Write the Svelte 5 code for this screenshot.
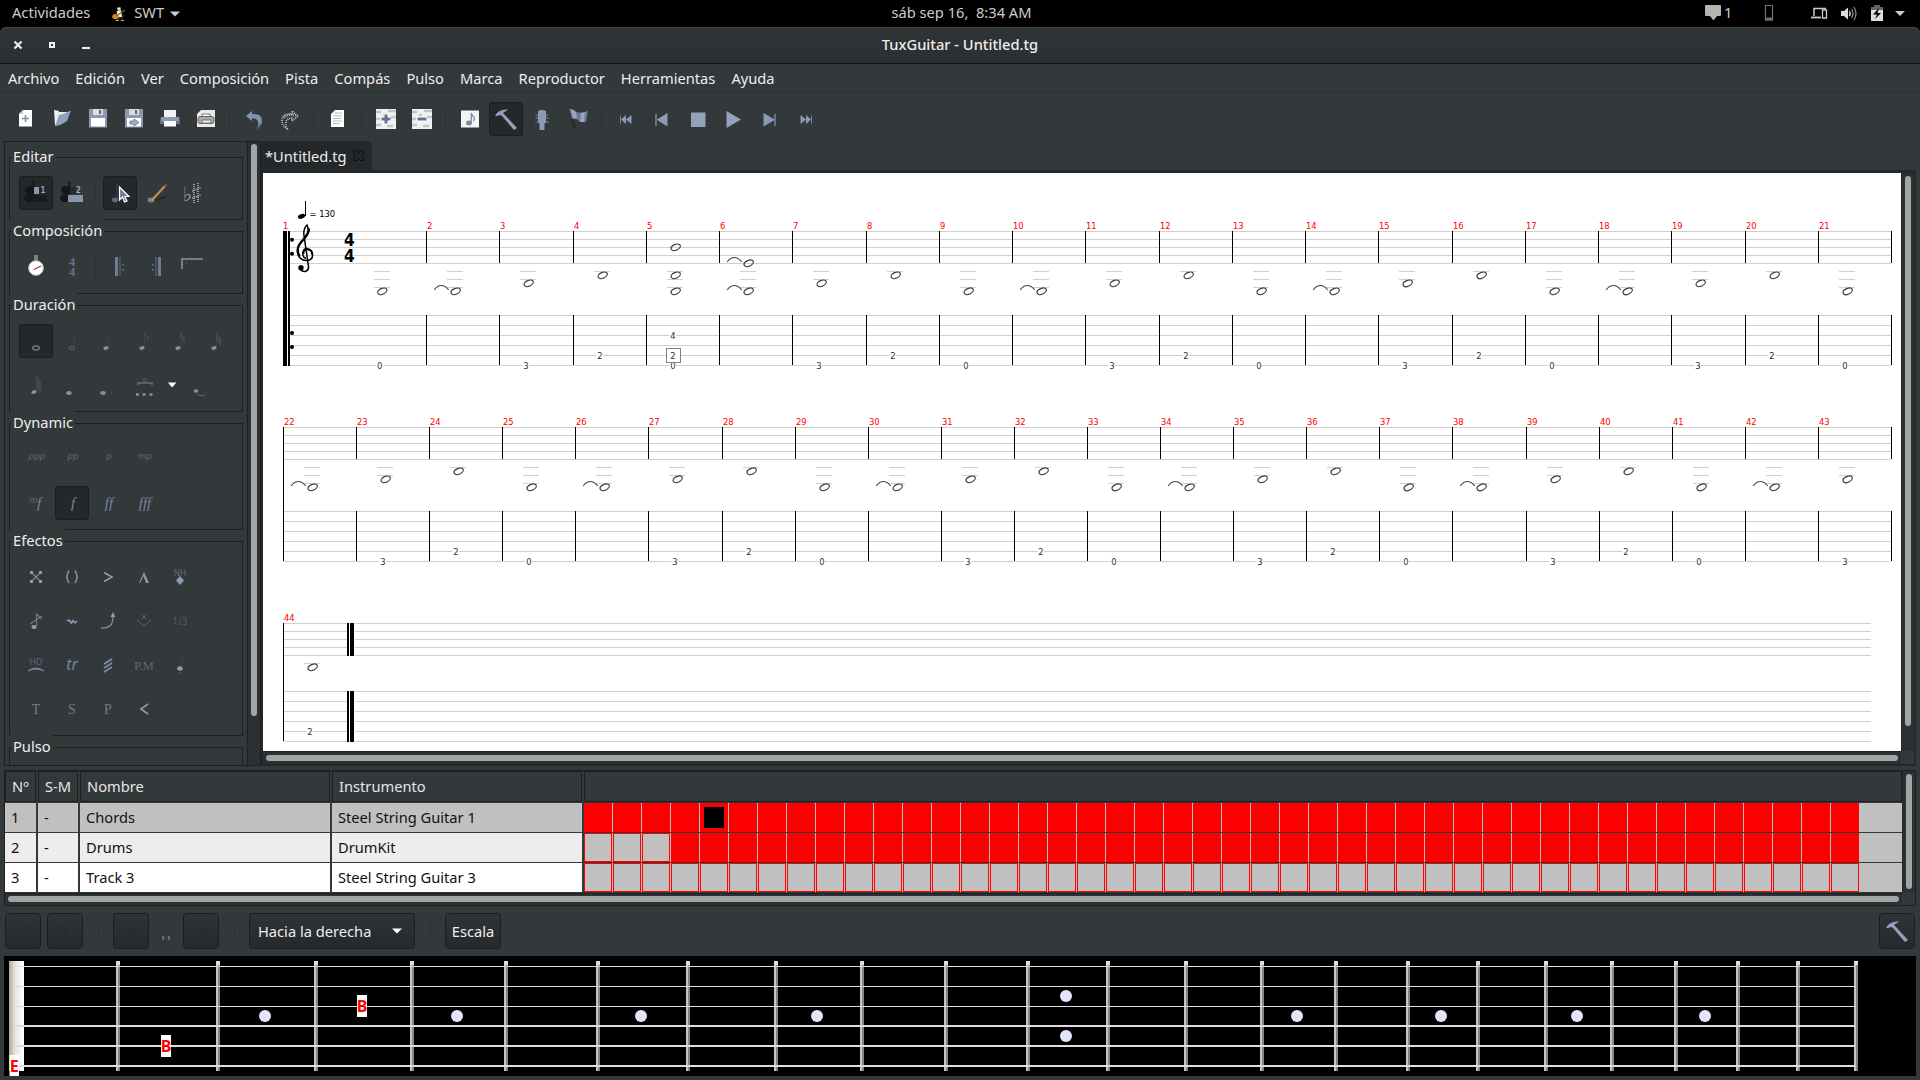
<script>
  const menus = ['Archivo', 'Edición', 'Ver', 'Composición', 'Pista', 'Compás', 'Pulso', 'Marca', 'Reproductor', 'Herramientas', 'Ayuda'];

  const toolbar = ['new', 'open', 'save', 'saveas', 'print', 'preview', '|', 'undo', 'redo', '|', 'doc', '|', 'trackadd', 'trackdel', '|', 'score', '*hammer', 'guitar', 'flag', '|', 'first', 'prev', 'stop', 'play', 'next', 'last'];

  const groups = [
    { title: 'Editar', rows: [['*voice1', 'voice2', '|', '*select', 'pencil', 'accidental']] },
    { title: 'Composición', rows: [['tempo', 'timesig', '|', 'repopen', 'repclose', 'repalt']] },
    { title: 'Duración', rows: [['*whole', 'half', 'quarter', 'eighth', 'sixteenth', 'thirty'], ['sixty', 'dotted', 'ddotted', 'tuplet', 'v', 'tied']] },
    { title: 'Dynamic', rows: [['ppp', 'pp', 'p', 'mp'], ['mf', '*f', 'ff', 'fff']] },
    { title: 'Efectos', rows: [['dead', 'ghost', 'accent', 'heavy', 'harmonic'], ['grace', 'vibrato', 'bend', 'tremolobar', 'slide'], ['hammeron', 'trill', 'tremolo', 'palm', 'staccato'], ['tap', 'slap', 'pop', 'fade']] },
    { title: 'Pulso', rows: [[]] }
  ];

  // Music: each measure repeats a four-bar figure, with chords in bars 5 and 6
  const figure = { 1: { y: 60.3, fret: '0', line: 5 }, 2: { y: 60.3, tie: true }, 3: { y: 52.3, fret: '3', line: 5 }, 0: { y: 44.3, fret: '2', line: 4 } };
  function notesOf(n) {
    if (n === 5) return [{ y: 16.3, fret: '4', line: 2 }, { y: 44.3 }, { y: 60.3, fret: '0', line: 5 }];
    if (n === 6) return [{ y: 32.3, tie: true }, { y: 60.3, tie: true }];
    return [figure[n % 4]];
  }
  function measure(n, x, top, tabTop, shift = 0) {
    const notes = notesOf(n);
    const low = Math.max(...notes.map((k) => k.y));
    return { n, x, top, tabTop, notes, nx: x + 29.7 + shift, tx: x + 27 + shift, ledgers: [40, 48, 56].filter((l) => l < low) };
  }
  const systems = [
    { top: 231, tab: 315, from: 290, to: 1891, measures: [measure(1, 282, 231, 315, 70.6), ...Array.from({ length: 20 }, (_, k) => measure(k + 2, Math.round(426 + 73.26 * k), 231, 315))] },
    { top: 427, tab: 511, from: 283, to: 1891, measures: Array.from({ length: 22 }, (_, k) => measure(k + 22, Math.round(283 + 73.09 * k), 427, 511)) },
    { top: 623, tab: 691, from: 283, to: 1871, measures: [measure(44, 283, 623, 691)] }
  ];

  const tracks = [
    { n: 1, name: 'Chords', inst: 'Steel String Guitar 1', empty: 0, current: 4 },
    { n: 2, name: 'Drums', inst: 'DrumKit', empty: 3, current: -1 },
    { n: 3, name: 'Track 3', inst: 'Steel String Guitar 3', empty: 44, current: -1 }
  ];
  const bars = Array.from({ length: 44 }, (_, k) => k);

  const frets = [116, 216, 314, 410, 504, 596, 686, 774, 860, 944, 1026, 1106, 1184, 1260, 1334, 1406, 1476, 1544, 1610, 1674, 1736, 1796, 1854];
  const dots = [[265, 1016], [457, 1016], [641, 1016], [817, 1016], [1066, 996], [1066, 1036], [1297, 1016], [1441, 1016], [1577, 1016], [1705, 1016]];
  const strings = [[966, 1], [986, 1], [1006, 1], [1025, 2], [1045, 2], [1065, 2]];
</script>

{#snippet flags(count, x, y)}
  {#each Array.from({ length: count }) as _, k}
    <path d="M{x} {y + k * 3}c.5 3 4 4 3 7" fill="none" stroke="#505b6c" stroke-width="1" />
  {/each}
{/snippet}

{#snippet track(sign)}
  <path d="M-10-10H10V10H-10z" fill="#f1f1f1" />
  <path d="M-10-7H-5M2-8H10M-10 0H-6M5-2H10M-10 6H-5M1 7H7M-3-4H0" stroke="#c2c5c8" stroke-width="2.500" />
  <path d="M-5 0H5{sign === '+' ? 'M0-5V5' : ''}" stroke="#fff" stroke-width="5" />
  <path d="M-4.500 0H4.500{sign === '+' ? 'M0-4.500V4.500' : ''}" stroke="#64748e" stroke-width="3" />
{/snippet}

{#snippet icon(name)}
  <svg class="icon" width="34" height="34" viewBox="-17 -17 34 34">
    {#if name === 'new'}
      <path d="M-3-9H6V7.500H-7V-5z" fill="#fff" /><path d="M-7-5H-3V-9z" fill="#c9cbcc" />
      <path d="M-.5-4V3M-4-.5H3" stroke="#7f90ab" stroke-width="1.600" />
    {:else if name === 'open'}
      <path d="M-8-9L-3-8V-7H6L5-4L-2 6H-7z" fill="#eceded" />
      <path d="M-3-4L1-5L9-8.500L5 2Q1 5-7 7.500z" fill="#8ea0bc" />
    {:else if name === 'save' || name === 'saveas'}
      <path d="M-9-10H9V8.500H-9z" fill="#8a98b0" />
      <path d="M-5-10H5V-4H-5z" fill="#dadcde" /><path d="M1-9H3V-5H1z" fill="#56647c" />
      <path d="M-7-1H7V7.500H-7z" fill="#fff" />
      {#if name === 'saveas'}<path d="M-4 2H0V0L5 3.500L0 7V5H-4z" fill="#9fb0c8" stroke="#5d6b82" stroke-width=".8" />{/if}
    {:else if name === 'print'}
      <path d="M-6-9H6V-1H-6z" fill="#f2f2f2" /><path d="M-9-2H9L10 5H-10z" fill="#8a9ab4" />
      <path d="M-10 2H10V5H-10z" fill="#66758e" /><path d="M-6 2H6V7.500H-6z" fill="#fff" />
    {:else if name === 'preview'}
      <path d="M-5-9H9V8H-9V-5z" fill="#eaeaea" />
      <path d="M-4-5H4V-2H-4z" fill="#fff" stroke="#777" /><rect x="-8" y="-2.500" width="16" height="7" rx="2" fill="#aaa" stroke="#666" /><path d="M-4 1H5V4H-4z" fill="#eee" stroke="#777" />
    {:else if name === 'undo'}
      <path d="M-8-3L-2-8V-5Q8-6 8 2Q8 7 3 9.500Q7 0-2-1V2z" fill="#7f92b1" />
      <path d="M7 5Q6 8 3 9.500" stroke="#4e5d78" fill="none" stroke-width="2" />
    {:else if name === 'redo'}
      <path d="M8-3L2-8V-5Q-8-6-8 2Q-8 7-3 9.500Q-7 0 2-1V2z" fill="none" stroke="#c3c6c8" stroke-width="1.600" stroke-dasharray="1 1" />
      <path d="M-6-1Q-3-5 3-4H7" fill="none" stroke="#a9adb0" stroke-width="2.500" stroke-dasharray="1 1" />
    {:else if name === 'doc'}
      <path d="M-3-9H6V8H-7V-5z" fill="#fff" /><path d="M-3-6H4M-5-3H4M-5-.5H3M-5 2H4M-5 4.500H2" stroke="#bbb" stroke-width="1" />
    {:else if name === 'trackadd'}{@render track('+')}
    {:else if name === 'trackdel'}{@render track('-')}
    {:else if name === 'score'}
      <path d="M-9-8.500H9V8.500H-9z" fill="#f4f4f4" /><ellipse cx="-1" cy="4" rx="3" ry="2.400" fill="#7a8dab" />
      <path d="M1.300 4V-6Q2-3 4-2Q5 0 3.500 2" fill="none" stroke="#7a8dab" stroke-width="1.300" />
    {:else if name === 'hammer'}
      <path d="M-11-3L-9-6Q-5-10 2-9.500L0-8Q-2-7-3-6L-2-5L11 9L8 11L-4-3L-6-4L-9-3z" fill="#93a2ba" />
    {:else if name === 'guitar'}
      <path d="M-4-8Q0-10 4-8L4 3L2.500 5V11H-2.500V5L-4 3z" fill="#8b9bb4" />
      <path d="M-6.500-4H-4M-6.500-1H-4M-6.500 3H-4M4-4H6.500M4-1H6.500M4 3H6.500" stroke="#65728a" stroke-width="1.300" />
    {:else if name === 'flag'}
      <path d="M-9-9L-3 9" stroke="#222" stroke-width="1.500" /><path d="M-9-10Q-5-10-2-7Q3-5 10-8L8 3Q2 4-1 0Q-3-1-6 0z" fill="#6d7b92" />
      <path d="M-7-10Q-4-9-2-7L-1 0L-5-1zM3-6L7-7L6 3L2 3z" fill="#98a7be" />
    {:else if name === 'first'}
      <path d="M-5.500-3.500V4.500" stroke="#76859f" /><path d="M-5 .5L0-4V5zM0 .5L5.500-4V5z" fill="#8b9bb4" />
    {:else if name === 'last'}
      <path d="M5.500-3.500V4.500" stroke="#76859f" /><path d="M5 .5L0-4V5zM0 .5L-5.500-4V5z" fill="#8b9bb4" />
    {:else if name === 'prev'}
      <path d="M-6-5V7" stroke="#8b9bb4" stroke-width="1.200" /><path d="M-5.500.8L5.500-6V7.500z" fill="#8b9bb4" />
    {:else if name === 'next'}
      <path d="M5-5V7" stroke="#8b9bb4" stroke-width="1.200" /><path d="M5 .8L-6.500-6V7.500z" fill="#8b9bb4" />
    {:else if name === 'stop'}
      <path d="M-7-6.500H7.500V8H-7z" fill="#93a2bb" />
    {:else if name === 'play'}
      <path d="M-7.500-8L7 .5L-7.500 9z" fill="#93a2bb" />
    {:else if name === 'voice1' || name === 'voice2'}
      <ellipse cx="-6" cy="-3" rx="5" ry="4" fill="#141617" /><ellipse cx="-7" cy="5" rx="5" ry="4" fill="#141617" /><path d="M-2.500-12V6" stroke="#141617" stroke-width="2" />
      {#if name === 'voice1'}
        <path d="M-4 2H11V9H-4z" fill="#1a1d1f" /><path d="M-2-6H3V1H-2z" fill="#8796ae" /><text x="4.500" y="0" class="mono">1</text>
      {:else}
        <path d="M-2-6H4V1H-2z" fill="#25292b" /><path d="M-4 2H11V9H-4z" fill="#8796ae" /><text x="4" y="0" class="mono">2</text>
      {/if}
    {:else if name === 'select'}
      <path d="M-3-9V5" stroke="#3b4350" /><ellipse cx="-5" cy="7" rx="3" ry="2.400" fill="#5d6a80" />
      <path d="M-.5-6V7L2.500 4L4.500 9L7 8L5 3.500H9z" fill="#70819c" stroke="#fff" stroke-width="1.200" />
    {:else if name === 'pencil'}
      <path d="M0 8Q5 5 10 4" stroke="#25292b" stroke-width="2" fill="none" /><ellipse cx="-5" cy="7" rx="3.500" ry="2.400" fill="#76849b" />
      <path d="M-4 7L9-7" stroke="#c98c44" stroke-width="2.200" /><path d="M8.500-6.500L10.500-8.500" stroke="#8a4b45" stroke-width="2.400" />
    {:else if name === 'accidental'}
      <text x="-9.500" y="8" class="sym">♭</text><path d="M2-9V10M6-10V9M0-2L9-5M0 5L9 2" stroke="#a5a9ab" stroke-width="1.800" stroke-dasharray="1 1" />
    {:else if name === 'tempo'}
      <path d="M-2-12H2V-7H-2z" fill="#7d8183" /><circle cx="0" cy="1" r="7.300" fill="#fff" stroke="#c8cacb" /><path d="M-2 2.500L5-1" stroke="#b03030" stroke-width="1.300" />
    {:else if name === 'timesig'}
      <text x="0" y="-1.500" class="sig">4</text><text x="0" y="9" class="sig">4</text>
    {:else if name === 'repopen'}
      <path d="M-5-10H-2V9H-5z" fill="#6f7c94" /><path d="M0-10V9" stroke="#59657a" stroke-width="1.200" /><path d="M2.300-3H4V-1.500H2.300zM2.300 2H4V3.500H2.300z" fill="#66728a" />
    {:else if name === 'repclose'}
      <path d="M2-10H5V9H2z" fill="#6f7c94" /><path d="M0-10V9" stroke="#59657a" stroke-width="1.200" /><path d="M-4-3H-2.300V-1.500H-4zM-4 2H-2.300V3.500H-4z" fill="#66728a" />
    {:else if name === 'repalt'}
      <path d="M-10 2V-8H11" fill="none" stroke="#707d95" stroke-width="2" /><path d="M-6-4H-5V-3H-6z" fill="#66728a" />
    {:else if name === 'whole'}
      <ellipse cx="0" cy="7" rx="3.300" ry="2" fill="none" stroke="#6a7790" stroke-width="1.400" />
    {:else if name === 'half'}
      <ellipse cx="0" cy="7" rx="2.600" ry="1.600" fill="none" stroke="#59657b" transform="rotate(-25 0 7)" /><path d="M2.500 6V-8" stroke="#3a4248" />
    {:else if ['quarter', 'eighth', 'sixteenth', 'thirty', 'sixty'].includes(name)}
      <ellipse cx="-2" cy="7" rx="2.800" ry="1.900" fill="#8190a9" transform="rotate(-20 -2 7)" /><path d="M.5 6V-8" stroke="#3c444b" />
      {@render flags({ quarter: 0, eighth: 1, sixteenth: 2, thirty: 3, sixty: 4 }[name], 1, -8)}
    {:else if name === 'dotted' || name === 'ddotted'}
      <ellipse cx={name === 'dotted' ? -3 : -5} cy="8" rx="2.800" ry="1.900" fill="#8190a9" /><path d="M{name === 'dotted' ? 0 : -2} 7V-7" stroke="#394147" /><path d="M3 8H{name === 'dotted' ? 4 : 8}" stroke="#4a525d" stroke-dasharray="1 2" />
    {:else if name === 'tuplet'}
      <path d="M-6 0V-2H8V0" fill="none" stroke="#66728a" stroke-width="1.500" /><circle cx="1" cy="-5" r="1.600" fill="none" stroke="#505b6c" /><path d="M-8 9.500h3M-1.500 9.500h3M5.500 9.500h3" stroke="#8190a9" stroke-width="2.600" />
    {:else if name === 'v'}
      <path d="M-4-2.500H4.500L0 2.500z" fill="#fff" />
    {:else if name === 'tied'}
      <ellipse cx="-4" cy="6" rx="2.400" ry="1.700" fill="#8190a9" /><path d="M-2 5V-7" stroke="#394147" /><path d="M-3 9Q1 12 5 10" fill="none" stroke="#59657b" />
    {:else if ['ppp', 'pp', 'p', 'mp'].includes(name)}
      <text x="1" y="0" class="dyn soft">{name}</text>
    {:else if name === 'mf'}
      <text x="-2.500" y="0" class="dyn soft">m</text><text x="3" y="4.500" class="dyn loud">f</text>
    {:else if ['f', 'ff', 'fff'].includes(name)}
      <text x="1" y="4.500" class="dyn loud">{name}</text>
    {:else if name === 'dead'}
      <path d="M-5-5L5 5M5-5L-5 5" stroke="#7f8da6" stroke-width="1.100" />
      <path d="M-6-6h3v3h-3zM3-6h3v3h-3zM-6 3h3v3h-3zM3 3h3v3h-3z" fill="#8b9bb4" />
    {:else if name === 'ghost'}
      <path d="M-3-6.500Q-7 0-3 6M3-6.500Q7 0 3 6" fill="none" stroke="#7f8da6" stroke-width="1.600" />
    {:else if name === 'accent'}
      <path d="M-4-4.500L4 0L-4 4.500" fill="none" stroke="#8b9bb4" stroke-width="1.600" />
    {:else if name === 'heavy'}
      <path d="M-5 6L0-5L5 6H2L-.5-1L-4 6z" fill="#8b9bb4" />
    {:else if name === 'harmonic'}
      <text x="0" y="-1" class="sans">NH</text><path d="M0-1L4 3.500L0 8L-4 3.500z" fill="#8b9bb4" />
    {:else if name === 'grace'}
      <ellipse cx="-2" cy="6" rx="2.600" ry="2" fill="#8b9bb4" /><path d="M.5 5V-7L6-2M-6 3L6-5" fill="none" stroke="#6f7c94" stroke-width="1.100" />
    {:else if name === 'vibrato'}
      <path d="M-5 0L-3-1L-.5 2L1-.5L3 1.800L5 0" fill="none" stroke="#8b9bb4" stroke-width="1.600" />
    {:else if name === 'bend'}
      <path d="M-7 7Q5 8 5-4" fill="none" stroke="#7f8da6" stroke-width="1.300" /><path d="M2.500-4L5-9L7.500-4z" fill="#8b9bb4" />
    {:else if name === 'tremolobar'}
      <path d="M-7-1L0 5L7-1M-2-6L2-2M2-6L-2-2" fill="none" stroke="#59657b" stroke-width="1" />
    {:else if name === 'slide'}
      <text x="0" y="4" class="sans tiny">1/3</text>
    {:else if name === 'hammeron'}
      <text x="0" y="0" class="sans">HO</text><path d="M-8 6Q0 0 8 6Q0 2-8 6z" fill="#8b9bb4" stroke="#76859f" />
    {:else if name === 'trill'}
      <text x="0" y="5" class="dyn trill">tr</text>
    {:else if name === 'tremolo'}
      <path d="M-4-1L4-6M-4 3L4-2M-4 7L4 2" stroke="#7f8da6" stroke-width="1.800" />
    {:else if name === 'palm'}
      <text x="0" y="5" class="ser pm">P.M</text>
    {:else if name === 'staccato'}
      <ellipse cx="0" cy="3.500" rx="2.800" ry="2.200" fill="#8b9bb4" /><path d="M2.500 3V-7" stroke="#3c444b" /><path d="M-1 8H1" stroke="#59657b" />
    {:else if name === 'tap'}<text x="0" y="4.800" class="ser">T</text>
    {:else if name === 'slap'}<text x="0" y="4.800" class="ser">S</text>
    {:else if name === 'pop'}<text x="0" y="4.800" class="ser">P</text>
    {:else if name === 'fade'}
      <path d="M4-5L-3 0L4 5" fill="none" stroke="#8b9bb4" stroke-width="1.700" />
    {/if}
  </svg>
{/snippet}

{#snippet cell(item)}
  {#if item === '|'}
    <span class="sep"></span>
  {:else}
    <span class="cell" class:on={item.startsWith('*')} class:narrow={item === 'v'}>{@render icon(item.replace('*', ''))}</span>
  {/if}
{/snippet}

<div class="screen">
  <header class="topbar">
    <div class="left">
      <span>Actividades</span>
      <svg width="14" height="16" viewBox="0 0 14 16">
        <path d="M5 1h4l1 5 2 4-1 4H4L3 9z" fill="#202020" /><path d="M5 5h4l1 6H5z" fill="#f0f0f0" /><path d="M5.500 1.500h3V4h-3z" fill="#eee" />
        <path d="M6 3.500h3V5H6zM4 14h3v1.500H3zM9 14h3l1 1.500H9z" fill="#e8a33d" /><ellipse cx="3.500" cy="10.500" rx="3.300" ry="2.600" fill="#d98422" /><path d="M4 10L13 4" stroke="#8f5b2b" stroke-width="1.200" />
      </svg>
      <span class="swt">SWT</span>
      <svg width="10" height="6" viewBox="0 0 10 6"><path d="M0 .5H10L5 5.500z" fill="#ccc" /></svg>
    </div>
    <div class="clock">sáb sep 16,&nbsp; 8:34 AM</div>
    <svg class="tray" width="210" height="27" viewBox="1700 0 210 27">
      <path d="M1706 5h14q1 0 1 1v9q0 1-1 1h-3l-3.500 4.500L1710 16h-4q-1 0-1-1V6q0-1 1-1z" fill="#b4b4b4" />
      <text x="1724" y="17.500" class="count">1</text>
      <path d="M1765.500 5.500h7v14.500h-7z" fill="none" stroke="#6f6f6f" stroke-width="1.200" /><path d="M1765 17.500h8v3h-8z" fill="#6f6f6f" />
      <path d="M1814 16V8.500H1826" fill="none" stroke="#ccc" stroke-width="1.500" /><path d="M1811 17.500h10" stroke="#ccc" stroke-width="1.800" /><path d="M1822.500 10h4v8h-4z" fill="none" stroke="#ccc" stroke-width="1.300" />
      <path d="M1841 11h3l4-3.500v12l-4-3.500h-3z" fill="#ddd" /><path d="M1849.500 11q1.500 2.500 0 5" fill="none" stroke="#ddd" stroke-width="1.300" /><path d="M1851.500 9q3 4.500 0 9M1854 7q4 6.500 0 13" fill="none" stroke="#888" stroke-width="1.200" />
      <path d="M1874 5h6v2h3v4h-12V7h3z" fill="#666" /><path d="M1871 10h12v11h-12z" fill="#ddd" /><path d="M1879 8L1873 14.500H1877L1875 19L1881 13H1877.500z" fill="#000" />
      <path d="M1895 11h10l-5 5z" fill="#ccc" />
    </svg>
  </header>

  <div class="titlebar">
    <svg class="wm" width="90" height="16" viewBox="10 37 90 16">
      <path d="M14.500 41.500l7 7M21.500 41.500l-7 7" stroke="#eee" stroke-width="2.200" /><path d="M50 43h4v4h-4z" fill="none" stroke="#eee" stroke-width="2" /><path d="M82 48h8" stroke="#eee" stroke-width="2" />
    </svg>
    <span>TuxGuitar - Untitled.tg</span>
  </div>

  <nav class="menubar">{#each menus as m}<span>{m}</span>{/each}</nav>
  <div class="toolbar">{#each toolbar as t}{@render cell(t)}{/each}</div>

  <main>
    <aside>
      <div class="groups">
        {#each groups as g}
          <section class="group">
            <div class="title">{g.title}</div>
            {#each g.rows as row}
              <div class="row">{#each row as t}{@render cell(t)}{/each}</div>
            {/each}
          </section>
        {/each}
      </div>
      <div class="vtrack"><i></i></div>
    </aside>

    <section class="editor">
      <div class="tab"><span>*Untitled.tg</span>
        <svg width="11" height="11" viewBox="0 0 11 11"><path d="M.5.5h3L5.500 3 7.500.5h3v3L8 5.500l2.500 2v3h-3L5.500 8l-2 2.500h-3v-3L3 5.500.5 3.500z" fill="none" stroke="#0c0d0e" /></svg>
      </div>
      <div class="sheet">
        <svg class="page" width="1638" height="578" viewBox="263 173 1638 578">
          {#each systems as s, si}
            <g shape-rendering="crispEdges">
              {#each [0, 8, 16, 24, 32] as d}<rect x={s.from} y={s.top + d} width={s.to - s.from} height="1" fill="#d0d0d0" />{/each}
              {#each [0, 10, 20, 30, 40, 50] as d}<rect x={s.from} y={s.tab + d} width={s.to - s.from} height="1" fill="#d0d0d0" />{/each}
              {#if si < 2}
                <rect x="1891" y={s.top} width="1" height="32" /><rect x="1891" y={s.tab} width="1" height="50" />
              {/if}
              {#if si > 0}<rect x="283" y={s.top} width="1" height={s.tab - s.top + 50} />{/if}
            </g>
            {#each s.measures as m, mi}
              <text class="num" x={m.x + 1} y={m.top - 2.200}>{m.n}</text>
              {#if mi > 0}
                <g shape-rendering="crispEdges"><rect x={m.x} y={m.top} width="1" height="32" /><rect x={m.x} y={m.tabTop} width="1" height="50" /></g>
              {/if}
              {#each m.ledgers as l}<rect x={Math.round(m.nx - 8.700)} y={m.top + l} width="16" height="1" fill="#d0d0d0" />{/each}
              {#each m.notes as k}
                <ellipse cx={m.nx} cy={m.top + k.y} rx="4.900" ry="2.900" transform="rotate(-24 {m.nx} {m.top + k.y})" fill="none" stroke="#3c3c3c" stroke-width="1.200" />
                {#if k.tie}<path d="M{m.nx - 21.500} {m.top + k.y - 1.500}q7-8.500 14.500 0" fill="none" stroke="#444" stroke-width="1.100" />{/if}
                {#if k.fret}
                  <rect x={m.tx - 3.500} y={m.tabTop + k.line * 10 - 3.500} width="6.500" height="8" fill="#fff" />
                  <text class="fret" x={m.tx} y={m.tabTop + k.line * 10 + 4}>{k.fret}</text>
                {/if}
              {/each}
            {/each}
          {/each}
          <!-- caret on the second string of bar 5 -->
          <rect x="666.500" y="348.500" width="14" height="14" fill="#fff" stroke="#808080" /><text class="fret" x="673" y="359">2</text>
          <!-- repeat sign, clef, metre and tempo -->
          <path d="M283 231h4v135h-4zM288 231h2v135h-2z" />
          {#each [239.700, 253.700, 333, 347] as y}<circle cx="292" cy={y} r="2" />{/each}
          <path d="M300.500 269.500c3 3.500 8.500 2 8-3L304 235.500c-.8-5.500 1.500-9 3-10.500c1.700 3 1.800 8-1 11.500c-4 5-8.500 8-8.500 14.500c0 6.500 5 10 9.500 9.500c4-.4 5.800-3 5.500-6c-.3-3-2.500-5-5-5c-3.500 0-5.500 3-4.500 6c.5 1.700 1.500 2.500 3 3" fill="none" stroke="#000" stroke-width="1.500" />
          <path d="M309 228.500c0 5-3.500 8.500-6 11.500c-3 3-5.300 6-5.300 10q0 4 2 6.500" fill="none" stroke="#000" stroke-width="2.400" />
          <path d="M303.500 254c-1-4 2-5.300 4-5c3 .3 4.800 3 4.700 5.500" fill="none" stroke="#000" stroke-width="2.200" />
          <circle cx="301" cy="267.700" r="2.700" />
          <text class="metre" x="349.300" y="245.500">4</text><text class="metre" x="349.300" y="261.500">4</text>
          <ellipse cx="301.500" cy="216.300" rx="3.700" ry="2.300" transform="rotate(-20 301.500 216.300)" /><path d="M305 201h1v15h-1z" />
          <text class="bpm" x="309.500" y="216.700">= 130</text>
          <path d="M347 623h2v33h-2zM347 691h2v51h-2zM350 623h4v33h-4zM350 691h4v51h-4z" /><path d="M349 623h1v33h-1zM349 691h1v51h-1zM354 623h1v33h-1zM354 691h1v51h-1z" fill="#fff" />
        </svg>
        <div class="vtrack"><i></i></div>
        <div class="htrack"><i></i></div>
        <div class="corner"></div>
      </div>
    </section>
  </main>

  <section class="tracks">
    <div class="table">
      <div class="tr head"><span>Nº</span><span>S-M</span><span>Nombre</span><span>Instrumento</span><span></span></div>
      {#each tracks as t}
        <div class="tr t{t.n}">
          <span>{t.n}</span><span>-</span><span>{t.name}</span><span>{t.inst}</span>
          <div class="bars">{#each bars as b}<b class:empty={b < t.empty} class:current={b === t.current}></b>{/each}</div>
        </div>
      {/each}
    </div>
    <div class="vtrack"><i></i></div>
    <div class="htrack"><i></i></div>
    <div class="corner"></div>
  </section>

  <div class="controls">
    <button class="btn sq"><svg width="8" height="10" viewBox="0 0 8 10"><path d="M7 1L2 5l5 4" /></svg></button>
    <button class="btn sq"><svg width="8" height="10" viewBox="0 0 8 10"><path d="M1 1l5 4-5 4" /></svg></button>
    <span class="bar"></span>
    <button class="btn sq"><svg width="10" height="8" viewBox="0 0 10 8"><path d="M1 7l4-5 4 5" /></svg></button>
    <span class="dur"><svg width="34" height="34" viewBox="-17 -17 34 34"><path d="M-2 5q-2.500 1.700 0 3.400M2 5q2.500 1.700 0 3.400" fill="none" stroke="#66728a" stroke-width="2" /></svg></span>
    <button class="btn sq"><svg width="10" height="8" viewBox="0 0 10 8"><path d="M1 1l4 5 4-5" /></svg></button>
    <span class="bar"></span>
    <button class="btn combo">Hacia la derecha<svg width="10" height="6" viewBox="0 0 10 6"><path class="solid" d="M0 .5H10L5 5.500z" /></svg></button>
    <span class="bar"></span>
    <button class="btn scale">Escala</button>
    <button class="btn sq tool">{@render icon('hammer')}</button>
  </div>

  <svg class="board" width="1912" height="120" viewBox="4 956 1912 120">
    <defs>
      <linearGradient id="nut"><stop offset="0" stop-color="#aaa79a" /><stop offset=".4" stop-color="#e6e5de" /><stop offset="1" stop-color="#fff" /></linearGradient>
    </defs>
    <rect x="4" y="956" width="1912" height="120" />
    <rect x="9" y="961" width="15" height="110" fill="url(#nut)" />
    {#each frets as x}
      <rect {x} y="961" width="2" height="110" fill="#c4c4c4" /><rect x={x + 2} y="961" width="2" height="110" fill="#858585" /><rect {x} y="961" width="4" height="4" fill="#dedede" />
    {/each}
    {#each strings as [y, h]}<rect x="14" {y} width="1841" height={h} fill="#e4dada" />{/each}
    {#each dots as [cx, cy]}<circle {cx} {cy} r="6" fill="#e4e4fa" />{/each}
    <rect x="161" y="1035" width="10" height="22" fill="#fff" /><text x="166" y="1052">B</text>
    <rect x="357" y="995" width="10" height="22" fill="#fff" /><text x="362" y="1012">B</text>
    <rect x="9.500" y="1055" width="9.500" height="21" fill="#fff" /><text x="14.300" y="1072">E</text>
  </svg>
</div>

<style>
  :global(body) { margin: 0; background: #33393b; overflow: hidden; }
  .screen { width: 1920px; height: 1080px; display: flex; flex-direction: column; background: #33383b; color: #eee; font: 14.670px 'Noto Sans', sans-serif; overflow: hidden; }
  svg { display: block; flex: none; }

  .topbar { height: 27px; flex: none; background: #000; color: #ccc; display: grid; grid-template-columns: 1fr auto 1fr; grid-template-rows: 27px; align-items: center; line-height: 24px; }
  .topbar span, .clock { padding-bottom: 3px; }
  .clock { padding-left: 3px; }
  .topbar .left { display: flex; align-items: center; padding-left: 12px; }
  .topbar .left > svg:nth-of-type(1) { margin: 0 8px 0 22px; }
  .swt { margin-right: 6px; }
  .tray { justify-self: end; margin-right: 10px; }
  .count { font: 14.670px 'Noto Sans', sans-serif; fill: #ccc; }

  .titlebar { height: 35px; flex: none; background: linear-gradient(#2f3437, #2b2f32); border-top: 1px solid #3f4447; border-bottom: 1px solid #0d0f10; border-radius: 6px 6px 0 0; display: grid; grid-template-columns: 1fr auto 1fr; align-items: center; box-shadow: 0 -6px 0 #000; font-weight: 500; }
  .titlebar span { padding-bottom: 3px; }
  .wm { margin: 0 0 1px 10px; }

  .menubar { height: 28px; flex: none; display: flex; gap: 16px; padding-left: 8px; line-height: 29px; border-bottom: 1px solid #2c3134; }
  .toolbar { height: 48px; flex: none; display: flex; align-items: center; padding-left: 8px; box-sizing: border-box; padding-top: 3px; }
  .cell { width: 34px; height: 34px; margin: 0 1px; flex: none; box-sizing: border-box; border-radius: 4px; display: flex; align-items: center; justify-content: center; }
  .cell.on { background: #24282b; box-shadow: inset 0 0 0 1px #1b1e20; }
  .cell.narrow { width: 18px; }
  .sep { width: 12px; height: 22px; flex: none; background: linear-gradient(#2c3134, #2c3134) 5px 0 / 1px 100% no-repeat; }

  main { height: 625px; flex: none; display: flex; padding-left: 4px; }
  aside { width: 257px; height: 625px; box-sizing: border-box; display: flex; border: 1px solid #1d2021; }
  .groups { width: 243px; box-sizing: border-box; padding: 15px 4px 0; height: 623px; overflow: hidden; border-right: 1px solid #1d2021; display: flex; flex-direction: column; gap: 11px; }
  .group { flex: none; border: 1px solid #1d2021; box-sizing: border-box; width: 234px; padding: 0 8px 9px; }
  .title { width: max-content; background: #33383b; padding: 0 2px; margin: -13px 0 9px -7px; line-height: 22px; }
  .row { display: flex; align-items: center; height: 34px; }
  .row + .row { margin-top: 10px; }

  .vtrack { background: #2b3033; display: flex; justify-content: center; box-sizing: border-box; border-left: 1px solid #24282b; }
  .htrack { background: #2b3033; display: flex; align-items: center; box-sizing: border-box; border-top: 1px solid #1d2021; }
  .vtrack i, .htrack i { display: block; background: #a3a5a4; border-radius: 3px; }
  .vtrack i { width: 6px; }
  .htrack i { height: 6px; }
  aside .vtrack { flex: 1; padding-top: 2px; border-left: 0; }
  aside .vtrack i { height: 572px; }

  .editor { width: 1655px; height: 625px; display: flex; flex-direction: column; }
  .tab { width: 111px; height: 29px; background: #24282b; border-radius: 0 5px 0 0; display: flex; align-items: center; justify-content: space-between; padding: 0 8px 0 4px; box-sizing: border-box; line-height: 30px; }
  .sheet { display: grid; grid-template-columns: 1638px 13px; grid-template-rows: 578px 13px; border: solid #24282b; border-width: 3px 2px 2px; }
  .page { background: #fff; }
  .sheet .vtrack { padding-top: 3px; }
  .sheet .vtrack i { height: 550px; }
  .sheet .htrack i { width: 1632px; margin-left: 3px; }
  .num, .fret, .bpm { font: 9.330px 'DejaVu Sans Condensed', 'DejaVu Sans', sans-serif; font-stretch: condensed; }
  .num { fill: #f00; }
  .fret { fill: #303030; text-anchor: middle; }
  .metre { font: bold 17px 'DejaVu Sans Condensed', 'DejaVu Sans', sans-serif; font-stretch: condensed; text-anchor: middle; }

  .tracks { flex: none; margin: 4px 4px 0; height: 136px; box-sizing: border-box; border: 1px solid #1d2021; display: grid; grid-template-columns: 1897px 13px; grid-template-rows: 122px 12px; }
  .table { background: #33383b; display: flex; flex-direction: column; gap: 1px; }
  .tr { display: grid; grid-template-columns: 31px 40px 250px 250px 1318px; column-gap: 2px; height: 29px; line-height: 29px; color: #111; }
  .tr > span { padding-left: 6px; background: var(--row); }
  .head { height: 31px; color: #e6e6e6; line-height: 28px; }
  .head > span { border: 1px solid #1d2021; box-sizing: border-box; padding-left: 6px; }
  .t1 { --row: #c0c0c0; }
  .t2 { --row: #ededed; }
  .t3 { --row: #fff; }
  .bars { display: flex; gap: 1px; background: #c0c0c0; }
  .bars b { width: 28px; height: 29px; background: #f00; box-sizing: border-box; }
  .bars .empty { background: #c0c0c0; border: 1px solid #f00; }
  .bars .current { background: #000; border: 4px solid #f00; }
  .tracks .vtrack { padding-top: 3px; }
  .tracks .vtrack i { height: 115px; }
  .tracks .htrack { padding-bottom: 1px; }
  .tracks .htrack i { width: 1891px; margin-left: 3px; }

  .controls { height: 50px; flex: none; display: flex; align-items: center; padding: 0 5px; box-sizing: border-box; }
  .btn { height: 36px; box-sizing: border-box; border: 1px solid #1b1e20; border-radius: 4px; background: linear-gradient(#2e3336, #25292c); color: #eee; font: inherit; padding: 0 0 1px; display: flex; align-items: center; justify-content: center; }
  .sq { width: 36px; }
  .sq + .sq { margin-left: 6px; }
  .btn svg:not(.icon) path { fill: none; stroke: #262b2e; stroke-width: 1.500; }
  .btn svg:not(.icon) path.solid { fill: #fff; stroke: none; }
  .bar { width: 1px; height: 20px; background: #2c3134; margin: 0 14px 0 15px; }
  .dur { width: 34px; }
  .combo { width: 166px; padding: 0 12px 1px 8px; justify-content: space-between; }
  .scale { width: 56px; }
  .tool { margin-left: auto; }

  .board { margin-left: 4px; }
  .board text { font: bold 16px 'Noto Sans', sans-serif; fill: #f00; text-anchor: middle; }

  .mono { font: bold 8px 'DejaVu Sans Mono', monospace; fill: #9aa8bd; }
  .sym { font: 20px 'DejaVu Sans', sans-serif; fill: #95999b; }
  .sig { font: bold 12.500px 'Liberation Serif', serif; fill: #66728a; text-anchor: middle; }
  .dyn { text-anchor: middle; }
  .soft { font: italic 9.700px 'Noto Sans', sans-serif; fill: #5c677b; }
  .loud { font: italic 15px 'Liberation Serif', serif; fill: #7785a0; }
  .trill { font: italic 16px 'Noto Sans', sans-serif; fill: #7785a0; }
  .sans { font: 8.500px 'Noto Sans', sans-serif; fill: #606c82; text-anchor: middle; }
  .tiny { font-size: 10px; fill: #505b6d; }
  .ser { font: 14px 'Liberation Serif', serif; fill: #6c7a94; text-anchor: middle; }
  .pm { font-size: 12.500px; fill: #5c677b; }
</style>
